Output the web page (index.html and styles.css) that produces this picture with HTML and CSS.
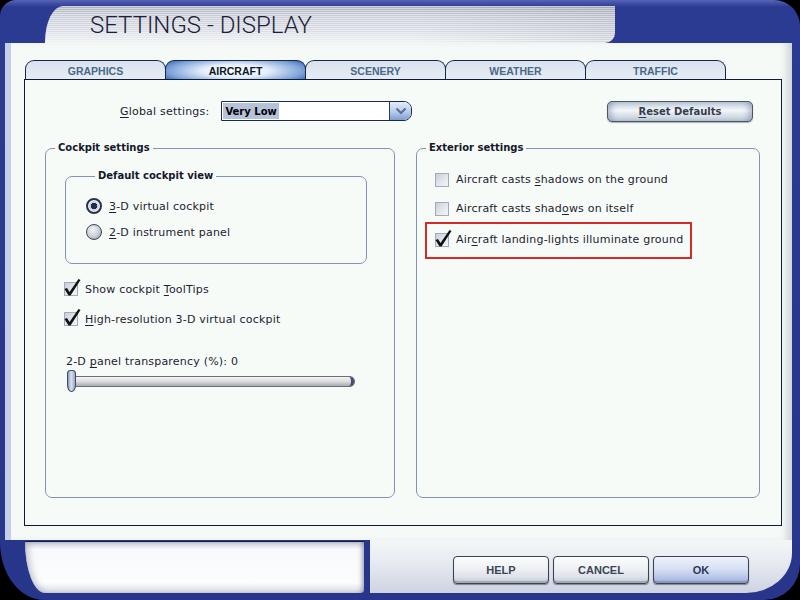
FILE: index.html
```html
<!DOCTYPE html>
<html lang="en">
<head>
    <meta charset="UTF-8">
    <meta name="viewport" content="width=device-width, initial-scale=1.0">
    <title>Settings - Display</title>
    <link rel="stylesheet" href="styles.css">
</head>
<body>
<div class="window">
    <div class="titlebar">
        <div class="title-tab">
            <h1>SETTINGS - DISPLAY</h1>
        </div>
    </div>

    <div class="client">
        <div class="tabs">
            <div class="tab">GRAPHICS</div>
            <div class="tab active">AIRCRAFT</div>
            <div class="tab">SCENERY</div>
            <div class="tab">WEATHER</div>
            <div class="tab">TRAFFIC</div>
        </div>

        <div class="page">
            <div class="top-row">
                <label class="global-label"><u>G</u>lobal settings:</label>
                <div class="dropdown">
                    <span class="dropdown-value">Very Low</span>
                    <span class="dropdown-btn">
                        <svg width="12" height="8" viewBox="0 0 12 8"><path d="M1.5 1.5 L6 6 L10.5 1.5" fill="none" stroke="#5b6f96" stroke-width="2"/></svg>
                    </span>
                </div>
                <button class="btn reset-btn"><u>R</u>eset Defaults</button>
            </div>

            <div class="columns">
                <fieldset class="group cockpit">
                    <legend>Cockpit settings</legend>

                    <fieldset class="group view">
                        <legend>Default cockpit view</legend>
                        <div class="radio-row">
                            <span class="radio checked"></span>
                            <span><u>3</u>-D virtual cockpit</span>
                        </div>
                        <div class="radio-row">
                            <span class="radio"></span>
                            <span><u>2</u>-D instrument panel</span>
                        </div>
                    </fieldset>

                    <div class="check-row cockpit-row">
                        <span class="check checked">
                            <svg class="tick" width="18" height="18" viewBox="0 -4 18 18"><polygon points="0.5,7 3,6 5.5,10 14.5,-3 16.5,-2 6.5,13.5 4.5,13.5" fill="#111"/></svg>
                        </span>
                        <span>Show cockpit <u>T</u>oolTips</span>
                    </div>
                    <div class="check-row cockpit-row">
                        <span class="check checked">
                            <svg class="tick" width="18" height="18" viewBox="0 -4 18 18"><polygon points="0.5,7 3,6 5.5,10 14.5,-3 16.5,-2 6.5,13.5 4.5,13.5" fill="#111"/></svg>
                        </span>
                        <span><u>H</u>igh-resolution 3-D virtual cockpit</span>
                    </div>

                    <div class="slider-label">2-D <u>p</u>anel transparency (%): 0</div>
                    <div class="slider">
                        <div class="slider-track"></div>
                        <div class="slider-thumb"></div>
                    </div>
                </fieldset>

                <fieldset class="group exterior">
                    <legend>Exterior settings</legend>
                    <div class="check-row ext-row">
                        <span class="check"></span>
                        <span>Aircraft casts <u>s</u>hadows on the ground</span>
                    </div>
                    <div class="check-row ext-row">
                        <span class="check"></span>
                        <span>Aircraft casts shad<u>o</u>ws on itself</span>
                    </div>
                    <div class="highlight">
                        <div class="check-row">
                            <span class="check checked">
                                <svg class="tick" width="18" height="18" viewBox="0 -4 18 18"><polygon points="0.5,7 3,6 5.5,10 14.5,-3 16.5,-2 6.5,13.5 4.5,13.5" fill="#111"/></svg>
                            </span>
                            <span>Air<u>c</u>raft landing-lights illuminate ground</span>
                        </div>
                    </div>
                </fieldset>
            </div>
        </div>
    </div>

    <div class="footer">
        <div class="status"></div>
        <div class="footer-right">
            <button class="btn foot-btn">HELP</button>
            <button class="btn foot-btn">CANCEL</button>
            <button class="btn foot-btn ok">OK</button>
        </div>
    </div>
</div>
</body>
</html>
```

FILE: styles.css
```css
body {
    margin: 0;
    background-color: #000;
    font-family: 'DejaVu Sans', Verdana, sans-serif;
    font-size: 11px;
    letter-spacing: 0.2px;
    color: #1e2230;
    width: 800px;
    height: 600px;
    overflow: hidden;
}

u {
    text-decoration: underline;
    text-underline-offset: 2px;
}

.window {
    width: 800px;
    height: 600px;
    box-sizing: border-box;
    display: flex;
    flex-direction: column;
    overflow: hidden;
    background: linear-gradient(to bottom, #5564b6 0, #2c3b92 7px, #27358b 100%);
    border-radius: 16px 26px 36px 44px / 16px 26px 36px 58px;
}

/* title bar */

.titlebar {
    flex: none;
    height: 43px;
    display: flex;
    align-items: flex-end;
    padding-left: 45px;
}

.title-tab {
    width: 570px;
    height: 37px;
    box-sizing: border-box;
    padding: 4px 0 0 45px;
    border-radius: 18px 0 10px 0 / 36px 0 10px 0;
    background:
        repeating-linear-gradient(to bottom, rgba(255, 255, 255, 0.45) 0 1px, rgba(255, 255, 255, 0) 1px 2px),
        linear-gradient(to right, rgba(0, 0, 0, 0) 65%, rgba(110, 115, 135, 0.18) 100%),
        linear-gradient(to bottom, #a9aebd 0%, #c9cdd8 25%, #d9dce5 65%, #eef2f2 100%);
}

.title-tab h1 {
    margin: 0;
    font-family: Roboto, 'Liberation Sans', sans-serif;
    font-weight: 300;
    font-size: 24px;
    line-height: 30px;
    letter-spacing: 0;
    color: #1b2138;
}

/* client area */

.client {
    flex: none;
    height: 497px;
    box-sizing: border-box;
    margin: 0 8px 0 5px;
    border-left: 6px solid #c2cfe6;
    padding: 17px 10px 14px 13px;
    background-color: #f5faf7;
    box-shadow: inset -9px 0 8px -5px rgba(110, 120, 150, 0.35);
}

.tabs {
    display: flex;
    height: 19px;
    padding-left: 1px;
}

.tab {
    width: 141px;
    height: 19px;
    box-sizing: border-box;
    margin-right: -1px;
    border: 1px solid #16284a;
    border-bottom: none;
    border-radius: 9px 9px 0 0;
    background: linear-gradient(to bottom, #d9e2ee, #e6ecf4);
    font-family: 'Liberation Sans', Arial, sans-serif;
    font-weight: bold;
    font-size: 10.5px;
    letter-spacing: 0;
    line-height: 20px;
    text-align: center;
    color: #4a6889;
}

.tab.active {
    color: #0e1628;
    background: radial-gradient(ellipse 60% 90% at 50% 55%, #ffffff 0%, #e4eefa 40%, #7fa2d8 80%, #3f67b3 100%);
}

.page {
    height: 447px;
    box-sizing: border-box;
    border: 1px solid #0d1b38;
    background-color: #f6fbf8;
}

/* top row */

.top-row {
    display: flex;
    align-items: center;
    height: 22px;
    margin-top: 20px;
    padding: 0 28px 0 95px;
}

.global-label {
    margin-right: 12px;
}

.dropdown {
    display: flex;
    width: 191px;
    height: 20px;
    box-sizing: border-box;
    border: 1px solid #1c2a4a;
    border-radius: 0 8px 8px 0;
    background-color: #fff;
}

.dropdown-value {
    display: flex;
    align-items: center;
    margin: 1px 0 1px 1px;
    padding: 0 2px;
    background-color: #b6c2da;
    font-weight: bold;
    font-size: 10px;
    letter-spacing: 0;
    color: #000;
}

.dropdown-btn {
    margin-left: auto;
    width: 21px;
    display: flex;
    align-items: center;
    justify-content: center;
    border-left: 1px solid #2a3a62;
    border-radius: 0 7px 7px 0;
    background: linear-gradient(to bottom, #e4ecf8 0%, #b7cbeb 55%, #7f9dd2 100%);
}

.btn {
    font-family: 'Liberation Sans', Arial, sans-serif;
    font-weight: bold;
    font-size: 11px;
    color: #3b4555;
    padding: 0;
    cursor: pointer;
}

.reset-btn {
    margin-left: auto;
    width: 146px;
    height: 21px;
    border: 1px solid #4b5568;
    border-radius: 5px;
    font-family: 'DejaVu Sans', Verdana, sans-serif;
    font-size: 10px;
    color: #343e4c;
    background: linear-gradient(to bottom, #c3cddb 0%, #f4f7fa 45%, #e3e8ef 60%, #c3ccd9 100%);
    box-shadow: inset 6px 0 6px -3px rgba(90, 110, 150, 0.45), inset -6px 0 6px -3px rgba(90, 110, 150, 0.45), 0 1px 1px rgba(60, 70, 90, 0.4);
}

/* group boxes */

.columns {
    display: flex;
    gap: 21px;
    margin: 20px 21px 0 20px;
}

fieldset.group {
    margin: 0;
    padding: 0;
    min-width: 0;
    box-sizing: border-box;
    border: 1px solid #8593b3;
    border-radius: 7px;
}

fieldset.group legend {
    margin-left: 9px;
    padding: 0 3px;
    font-weight: bold;
    font-size: 10px;
    line-height: 12px;
    letter-spacing: 0;
    color: #14182a;
}

.cockpit {
    width: 350px;
    height: 356px;
}

.exterior {
    width: 344px;
    height: 356px;
    padding-top: 11px !important;
}

.view {
    width: 302px;
    margin: 16px 0 0 19px !important;
    padding: 11px 0 18px 20px !important;
}

.radio-row {
    display: flex;
    align-items: center;
    gap: 7px;
    height: 26px;
}

.radio {
    width: 16px;
    height: 16px;
    box-sizing: border-box;
    border-radius: 50%;
    border: 1px solid #3d4454;
    background: radial-gradient(circle at 40% 35%, #f4f5f8 0%, #c9cdd5 55%, #8d939f 100%);
}

.radio.checked {
    border: 2px solid #2b3242;
    background: radial-gradient(circle, #1e2c52 0 3px, #c9d2e4 3.5px 4.5px, #eef1f6 5px);
}

.check-row {
    display: flex;
    align-items: center;
    gap: 7px;
    height: 30px;
}

.cockpit-row {
    margin-left: 18px;
}

.cockpit-row:first-of-type {
    margin-top: 10px;
}

.check {
    position: relative;
    width: 14px;
    height: 14px;
    box-sizing: border-box;
    border: 1px solid #a3abbb;
    background: linear-gradient(135deg, #c9ced8 0%, #e6e9ef 60%, #f2f4f7 100%);
}

.tick {
    position: absolute;
    left: -1px;
    top: -5px;
}

.slider-label {
    margin: 21px 0 0 20px;
    line-height: 14px;
}

.slider {
    position: relative;
    width: 288px;
    height: 22px;
    margin: 1px 0 0 21px;
    display: flex;
    align-items: center;
}

.slider-track {
    flex: 1;
    height: 11px;
    box-sizing: border-box;
    border: 1px solid #6c707a;
    border-radius: 5px;
    background: linear-gradient(to bottom, #f5f5f5 0%, #dcdcde 50%, #a9aaae 100%);
    box-shadow: inset -5px 0 0 -2px #3e4f70;
}

.slider-thumb {
    position: absolute;
    left: 0;
    top: 0;
    width: 9px;
    height: 22px;
    box-sizing: border-box;
    border: 1px solid #3a4a6a;
    border-radius: 4px 4px 5px 5px / 4px 4px 8px 8px;
    background: linear-gradient(to right, #8a9ab8 0%, #dae3f0 45%, #9aa8c2 100%);
}

.ext-row {
    height: 29px;
    margin-left: 18px;
}

.highlight {
    width: 267px;
    height: 37px;
    box-sizing: border-box;
    margin: -1px 0 0 8px;
    border: 2px solid #d32a2a;
    padding: 0 0 0 8px;
}

.highlight .check-row {
    height: 31px;
}

/* footer */

.footer {
    flex: none;
    height: 60px;
    display: flex;
}

.status {
    width: 339px;
    height: 52px;
    margin: 1px 0 0 25px;
    box-sizing: border-box;
    border-top: 1px solid #151c3c;
    border-radius: 0 0 4px 0;
    border-bottom-left-radius: 20px 52px;
    background: linear-gradient(to bottom, #c5cad6 0, #f8f9fb 7px, #fcfdfd 80%, #d5d9e2 100%);
    box-shadow: inset -4px 0 4px -2px rgba(120, 128, 148, 0.7), inset 6px 0 6px -3px rgba(140, 148, 168, 0.5);
}

.footer-right {
    flex: 1;
    height: 53px;
    margin: 0 8px 0 6px;
    box-sizing: border-box;
    padding: 16px 43px 0 0;
    display: flex;
    justify-content: flex-end;
    align-items: flex-start;
    gap: 4px;
    border-radius: 0 0 46px 0 / 0 0 40px 0;
    background: linear-gradient(to bottom, #f4f7f6 0%, #e8ebf1 40%, #cdd3e2 100%);
}

.foot-btn {
    width: 96px;
    height: 28px;
    border: 1px solid #3c4352;
    border-radius: 4px;
    background: linear-gradient(to bottom, #fbfcfc 0%, #eef1f4 45%, #dfe3ea 75%, #c4cad6 100%);
    box-shadow: inset 0 -2px 1px rgba(90, 98, 118, 0.35), 0 1px 1px rgba(40, 50, 70, 0.5);
}

.foot-btn.ok {
    color: #2e3a52;
    background: linear-gradient(to bottom, #eef2fb 0%, #d8e0f4 45%, #bac8ea 75%, #9eb0dc 100%);
}
```
